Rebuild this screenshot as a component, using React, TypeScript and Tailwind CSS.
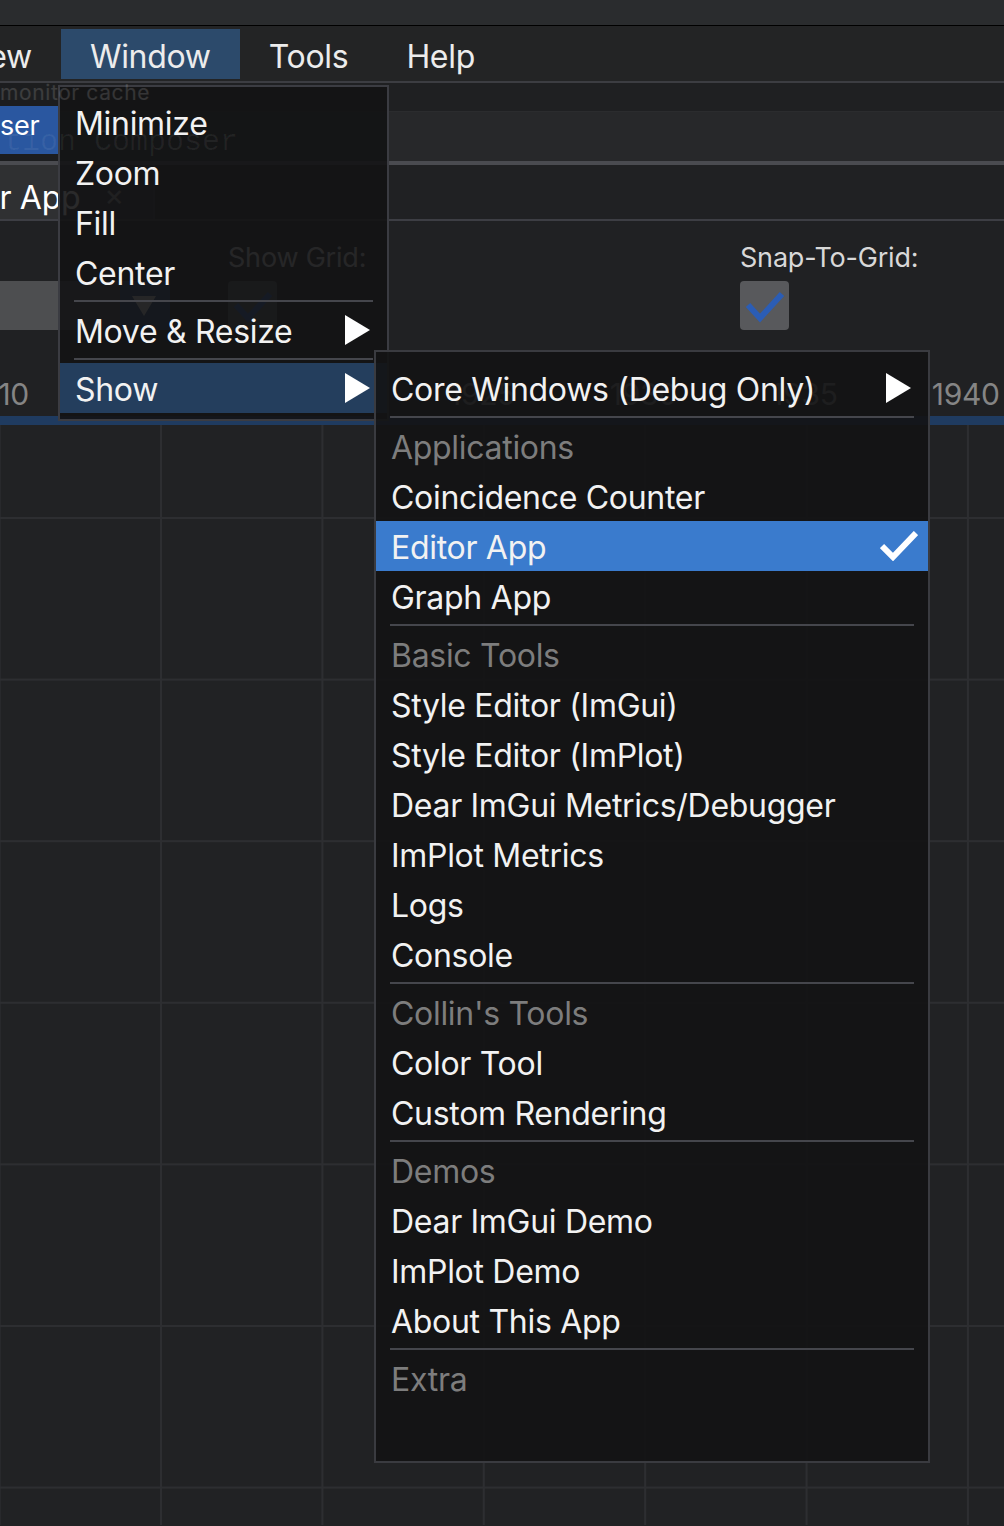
import React from 'react';
import clsx from 'clsx';

type Entry =
  | { kind: 'item'; label: string; arrow?: boolean; checked?: boolean; active?: string }
  | { kind: 'header'; label: string }
  | { kind: 'sep' };

const windowMenu: Entry[] = [
  { kind: 'item', label: 'Minimize' },
  { kind: 'item', label: 'Zoom' },
  { kind: 'item', label: 'Fill' },
  { kind: 'item', label: 'Center' },
  { kind: 'sep' },
  { kind: 'item', label: 'Move & Resize', arrow: true },
  { kind: 'sep' },
  { kind: 'item', label: 'Show', arrow: true, active: 'bg-[#243e5d]' },
];

const showMenu: Entry[] = [
  { kind: 'item', label: 'Core Windows (Debug Only)', arrow: true },
  { kind: 'sep' },
  { kind: 'header', label: 'Applications' },
  { kind: 'item', label: 'Coincidence Counter' },
  { kind: 'item', label: 'Editor App', checked: true, active: 'bg-[#3a7bcd]' },
  { kind: 'item', label: 'Graph App' },
  { kind: 'sep' },
  { kind: 'header', label: 'Basic Tools' },
  { kind: 'item', label: 'Style Editor (ImGui)' },
  { kind: 'item', label: 'Style Editor (ImPlot)' },
  { kind: 'item', label: 'Dear ImGui Metrics/Debugger' },
  { kind: 'item', label: 'ImPlot Metrics' },
  { kind: 'item', label: 'Logs' },
  { kind: 'item', label: 'Console' },
  { kind: 'sep' },
  { kind: 'header', label: "Collin's Tools" },
  { kind: 'item', label: 'Color Tool' },
  { kind: 'item', label: 'Custom Rendering' },
  { kind: 'sep' },
  { kind: 'header', label: 'Demos' },
  { kind: 'item', label: 'Dear ImGui Demo' },
  { kind: 'item', label: 'ImPlot Demo' },
  { kind: 'item', label: 'About This App' },
  { kind: 'sep' },
  { kind: 'header', label: 'Extra' },
];

const years = [1910, 1915, 1920, 1925, 1930, 1935, 1940];

function Arrow() {
  return (
    <svg width="25" height="30" viewBox="0 0 25 30" className="mr-[17px] shrink-0">
      <polygon points="0,0 25,15 0,30" fill="#ffffff" />
    </svg>
  );
}

function Check({ color, className }: { color: string; className?: string }) {
  return (
    <svg width="38" height="30" viewBox="0 0 38 30" className={className}>
      <polyline points="2,15 13,26 36,2" fill="none" stroke={color} strokeWidth="6" />
    </svg>
  );
}

function Checkbox() {
  return (
    <div className="h-[49px] w-[49px] rounded-[4px] bg-[#58595c]">
      <svg width="49" height="49" viewBox="0 0 49 49">
        <polyline points="8,24 20,37 42,13" fill="none" stroke="#2b5db5" strokeWidth="6" />
      </svg>
    </div>
  );
}

function MenuRows({ entries }: { entries: Entry[] }) {
  return (
    <>
      {entries.map((e, i) => {
        if (e.kind === 'sep') {
          return (
            <div key={i} className="h-[8px] pt-[3px]">
              <div className="mx-[14px] h-[2px] bg-[#45464c]" />
            </div>
          );
        }
        if (e.kind === 'header') {
          return (
            <div key={i} className="h-[50px] pl-[15px] pt-[4px] leading-[46px] whitespace-nowrap text-[#7d7d7d]">
              {e.label}
            </div>
          );
        }
        return (
          <div key={i} className={clsx('flex h-[50px] items-center justify-between pl-[15px]', e.active)}>
            <span className="pt-[4px] leading-[46px] whitespace-nowrap">{e.label}</span>
            {e.arrow && <Arrow />}
            {e.checked && <Check color="#ffffff" className="mr-[10px]" />}
          </div>
        );
      })}
    </>
  );
}

export default function App() {
  return (
    <div className="relative h-[1526px] w-[1004px] overflow-hidden bg-[#212224] font-[Inter,sans-serif] text-[32px] tracking-[-0.3px] text-[#f2f2f2]">
      {/* title bar */}
      <div className="h-[26px] border-b border-black bg-[#2a2c2e]" />

      {/* menu bar */}
      <div className="flex h-[57px] border-b-2 border-[#3c3d42] bg-[#232425] pt-[3px] text-[#ececec]">
        {['View', 'Window', 'Tools', 'Help'].map((m, i) => (
          <div
            key={m}
            className={clsx(
              'h-[50px] px-[29px] pt-[6px] leading-[44px]',
              i === 0 && 'ml-[-70px]',
              m === 'Window' && 'bg-[#2c4a6b]'
            )}
          >
            {m}
          </div>
        ))}
      </div>

      {/* dock header */}
      <div className="flex h-[78px]">
        <div className="flex w-[59px] flex-col bg-[#1c1d1f]">
          <div className="h-[23px]" />
          <div className="h-[48px] bg-[#2a57a0] text-[27px] leading-[40px] text-white">ser</div>
        </div>
        <div className="flex flex-1 flex-col">
          <div className="h-[29px] border-b border-[#2b2c2e] bg-[#1f2022]" />
          <div className="flex-1 bg-[#27282a]" />
        </div>
      </div>
      <div className="h-[4px] bg-[#4a4b50]" />
      <div className="flex h-[56px] border-b-2 border-[#3d3e44] bg-[#202123]">
        <div className="flex w-[155px] items-center overflow-hidden border-r-2 border-[#3a3b3f] bg-[#2f3032]">
          <span className="ml-[-75px] whitespace-nowrap pt-[12px] text-white">Editor App</span>
          <span className="ml-[24px] pt-[6px] text-[30px] text-[#9a9a9a]">×</span>
        </div>
      </div>

      {/* controls */}
      <div className="flex h-[143px] bg-[#202123] text-[27px] tracking-[-0.2px] text-[#d8d8d8]">
        <div className="flex w-[228px] pt-[60px]">
          <div className="h-[49px] w-[120px] bg-[#4d4e50]" />
          <div className="h-[49px] w-[50px] bg-[#2a4b7c]">
            <svg width="50" height="49" viewBox="0 0 50 49">
              <polygon points="12,15 36,15 24,35" fill="#d8d8d8" />
            </svg>
          </div>
        </div>
        <div className="w-[512px] pt-[19px]">
          <div className="leading-[36px]">Show Grid:</div>
          <div className="mt-[5px]">
            <Checkbox />
          </div>
        </div>
        <div className="pt-[19px]">
          <div className="leading-[36px]">Snap-To-Grid:</div>
          <div className="mt-[5px]">
            <Checkbox />
          </div>
        </div>
      </div>

      {/* ruler */}
      <div className="flex h-[52px] bg-[#202123] pt-[8px] text-[30px] leading-[44px] text-[#858585]">
        <div className="ml-[-82px] flex">
          {years.map((y) => (
            <div key={y} className="w-[161.2px] text-center">
              {y}
            </div>
          ))}
        </div>
      </div>
      <div className="h-[9px] bg-[#1f3b60]" />

      {/* plot grid */}
      <div className="h-[1100px] [background-image:linear-gradient(90deg,#2d2e31_2px,transparent_2px),linear-gradient(180deg,#2d2e31_2px,transparent_2px)] [background-size:161.4px_161.6px] [background-position:160px_92px]" />

      {/* Window menu */}
      <div className="absolute left-[58px] top-[85px] h-[336px] w-[331px] border-2 border-[#3b3c42] bg-[#131314]/90 pt-[10px]">
        <MenuRows entries={windowMenu} />
      </div>

      {/* Show submenu */}
      <div className="absolute left-[374px] top-[350px] h-[1113px] w-[556px] border-2 border-[#3a3b40] bg-[#131314]/90 pt-[11px]">
        <MenuRows entries={showMenu} />
      </div>

      {/* faint overlay labels */}
      <div className="pointer-events-none absolute left-[0px] top-[83px] whitespace-nowrap text-[21px] leading-[20px] tracking-[0.6px] text-white/[0.14]">
        monitor cache
      </div>
      <div className="pointer-events-none absolute left-[4px] top-[127px] whitespace-nowrap font-['Liberation_Mono',monospace] text-[30px] leading-[30px] tracking-normal text-white/[0.06]">
        tion Composer
      </div>
    </div>
  );
}
